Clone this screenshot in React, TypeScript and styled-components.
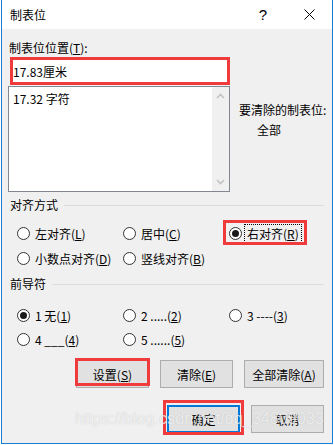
import React from 'react';
import styled, { createGlobalStyle } from 'styled-components';

const GlobalStyle = createGlobalStyle`
    html, body {
        margin: 0;
        padding: 0;
        background: #ffffff;
    }
    body {
        font-family: "Noto Sans CJK SC", "Microsoft YaHei UI", sans-serif;
        font-size: 12px;
        color: #000000;
    }
`;

const annotationRed = '#ef3b3b';

const Window = styled.div`
    position: relative;
    box-sizing: border-box;
    width: 332px;
    height: 444px;
    margin-left: 1px;
    background: #f0f0f0;
    border: 1px solid #1a7fd4;
    border-top: none;
    display: flex;
    flex-direction: column;
    overflow: hidden;
`;

const TitleBar = styled.div`
    height: 29px;
    flex-shrink: 0;
    background: #ffffff;
    display: flex;
    align-items: center;
    padding-left: 8px;
`;

const Title = styled.span`
    flex: 1;
    font-size: 12px;
    line-height: 16px;
`;

const TitleButton = styled.span<{ $width: number }>`
    width: ${({ $width }) => $width}px;
    height: 29px;
    display: flex;
    align-items: center;
    justify-content: center;
    font-family: "Liberation Sans", sans-serif;
    font-size: 15px;
`;

const Body = styled.div`
    flex: 1;
    padding: 0 8px 0 6px;
    display: flex;
    flex-direction: column;
`;

const TopRow = styled.div`
    margin-top: 11px;
    display: flex;
`;

const LeftColumn = styled.div`
    width: 222px;
    flex-shrink: 0;
    display: flex;
    flex-direction: column;
`;

const FieldLabel = styled.div`
    line-height: 16px;
    padding-left: 1px;
`;

const TabInput = styled.input`
    box-sizing: border-box;
    margin: 1px 0 0 2px;
    width: 220px;
    height: 28px;
    padding: 0;
    border: 3px solid ${annotationRed};
    background: #ffffff;
    font-family: inherit;
    font-size: 12px;
    color: #000000;
    outline: none;
`;

const ListBox = styled.div`
    box-sizing: border-box;
    margin-top: 1px;
    height: 106px;
    border: 1px solid #828790;
    background: #ffffff;
    display: flex;
`;

const ListItems = styled.div`
    flex: 1;
    padding: 4px 0 0 4px;
    line-height: 16px;
`;

const ScrollTrack = styled.div`
    width: 17px;
    background: #f0f0f0;
    display: flex;
    flex-direction: column;
    justify-content: space-between;
    align-items: center;
    padding: 6px 0;
`;

const RightColumn = styled.div`
    margin-left: 9px;
    padding-top: 62px;
    line-height: 16px;
    white-space: nowrap;
    display: flex;
    flex-direction: column;
    gap: 4px;
`;

const Indented = styled.div`
    padding-left: 18px;
`;

const GroupHeader = styled.div<{ $top: number }>`
    margin-top: ${({ $top }) => $top}px;
    display: flex;
    align-items: center;
    line-height: 16px;
    padding-left: 2px;

    &::after {
        content: '';
        flex: 1;
        height: 1px;
        margin-left: 6px;
        background: #dcdcdc;
    }
`;

const OptionGrid = styled.div<{ $top: number; $row: number }>`
    margin-top: ${({ $top }) => $top}px;
    padding-left: 9px;
    display: grid;
    grid-template-columns: 106px 106px 1fr;
    grid-auto-rows: ${({ $row }) => $row}px;
`;

const Option = styled.label<{ $marked?: boolean }>`
    position: relative;
    justify-self: start;
    display: flex;
    align-items: center;
    gap: 2px;

    ${({ $marked }) => $marked && `
        &::after {
            content: '';
            position: absolute;
            left: -6px;
            right: -5px;
            top: -1px;
            bottom: 1px;
            border: 3px solid ${annotationRed};
            pointer-events: none;
        }
    `}
`;

const RadioCircle = styled.span<{ $checked?: boolean }>`
    box-sizing: border-box;
    width: 13px;
    height: 13px;
    border-radius: 50%;
    border: 1px solid #333333;
    background: #ffffff;
    display: flex;
    align-items: center;
    justify-content: center;

    &::before {
        content: '';
        width: 7px;
        height: 7px;
        border-radius: 50%;
        background: ${({ $checked }) => ($checked ? '#1a1a1a' : 'transparent')};
    }
`;

const OptionText = styled.span<{ $focused?: boolean }>`
    line-height: 17px;
    padding: 0 2px;
    border: 1px ${({ $focused }) => ($focused ? 'dotted #000000' : 'solid transparent')};
    white-space: pre;
`;

const ButtonRow = styled.div<{ $top: number }>`
    margin-top: ${({ $top }) => $top}px;
    display: flex;
    justify-content: flex-end;
    gap: 11px;
`;

const DialogButton = styled.button<{ $width: number; $default?: boolean; $mark?: [number, number, number, number] }>`
    position: relative;
    box-sizing: border-box;
    width: ${({ $width }) => $width}px;
    height: 28px;
    padding: 0;
    background: #e1e1e1;
    border: ${({ $default }) => ($default ? '2px solid #0078d7' : '1px solid #adadad')};
    font-family: inherit;
    font-size: 12px;
    color: #000000;

    ${({ $mark }) => $mark && `
        &::after {
            content: '';
            position: absolute;
            top: ${$mark[0]}px;
            right: ${$mark[1]}px;
            bottom: ${$mark[2]}px;
            left: ${$mark[3]}px;
            border: 3px solid ${annotationRed};
            pointer-events: none;
        }
    `}
`;

const Watermark = styled.div`
    position: absolute;
    left: 73px;
    top: 409px;
    font-family: "Liberation Sans", Arial, sans-serif;
    font-size: 16px;
    letter-spacing: 0.1px;
    line-height: 20px;
    color: rgba(255, 255, 255, 0.7);
    text-shadow: 0 0 1px rgba(140, 140, 140, 0.45);
    pointer-events: none;
    white-space: nowrap;
`;

const Chevron = ({ up }: { up?: boolean }): JSX.Element => (
    <svg width="9" height="6" viewBox="0 0 9 6">
        <path
            d={up ? 'M1 5 L4.5 1.5 L8 5' : 'M1 1 L4.5 4.5 L8 1'}
            fill="none"
            stroke="#c2c2c2"
            strokeWidth="1.6"
        />
    </svg>
);

type RadioProps = {
    text: string;
    mnemonic: string;
    checked?: boolean;
    focused?: boolean;
    marked?: boolean;
};

const Radio = ({ text, mnemonic, checked, focused, marked }: RadioProps): JSX.Element => (
    <Option $marked={marked}>
        <RadioCircle $checked={checked} />
        <OptionText $focused={focused}>
            {text}(<u>{mnemonic}</u>)
        </OptionText>
    </Option>
);

const App = (): JSX.Element => {
    return (
        <>
            <GlobalStyle />
            <Window>
                <TitleBar>
                    <Title>制表位</Title>
                    <TitleButton $width={46}>?</TitleButton>
                    <TitleButton $width={46}>
                        <svg width="11" height="11" viewBox="0 0 11 11">
                            <path d="M0.5 0.5 L10.5 10.5 M10.5 0.5 L0.5 10.5" stroke="#000" strokeWidth="1" />
                        </svg>
                    </TitleButton>
                </TitleBar>
                <Body>
                    <TopRow>
                        <LeftColumn>
                            <FieldLabel>制表位位置(<u>T</u>):</FieldLabel>
                            <TabInput defaultValue="17.83厘米" />
                            <ListBox>
                                <ListItems>17.32 字符</ListItems>
                                <ScrollTrack>
                                    <Chevron up />
                                    <Chevron />
                                </ScrollTrack>
                            </ListBox>
                        </LeftColumn>
                        <RightColumn>
                            <div>要清除的制表位:</div>
                            <Indented>全部</Indented>
                        </RightColumn>
                    </TopRow>

                    <GroupHeader $top={5}>对齐方式</GroupHeader>
                    <OptionGrid $top={8} $row={25}>
                        <Radio text="左对齐" mnemonic="L" />
                        <Radio text="居中" mnemonic="C" />
                        <Radio text="右对齐" mnemonic="R" checked focused marked />
                        <Radio text="小数点对齐" mnemonic="D" />
                        <Radio text="竖线对齐" mnemonic="B" />
                    </OptionGrid>

                    <GroupHeader $top={5}>前导符</GroupHeader>
                    <OptionGrid $top={11} $row={24}>
                        <Radio text="1 无" mnemonic="1" checked />
                        <Radio text="2 ....." mnemonic="2" />
                        <Radio text="3 ----" mnemonic="3" />
                        <Radio text="4 ___" mnemonic="4" />
                        <Radio text="5 ......" mnemonic="5" />
                    </OptionGrid>

                    <ButtonRow $top={9}>
                        <DialogButton $width={73} $mark={[-3, -2, 1, -2]}>设置(<u>S</u>)</DialogButton>
                        <DialogButton $width={73}>清除(<u>E</u>)</DialogButton>
                        <DialogButton $width={80}>全部清除(<u>A</u>)</DialogButton>
                    </ButtonRow>
                    <ButtonRow $top={17}>
                        <DialogButton $width={73} $default $mark={[-7, -6, -4, -6]}>确定</DialogButton>
                        <DialogButton $width={73}>取消</DialogButton>
                    </ButtonRow>
                </Body>
                <Watermark>https://blog.csdn.net/qq_34809033</Watermark>
            </Window>
        </>
    );
};

export default App;
